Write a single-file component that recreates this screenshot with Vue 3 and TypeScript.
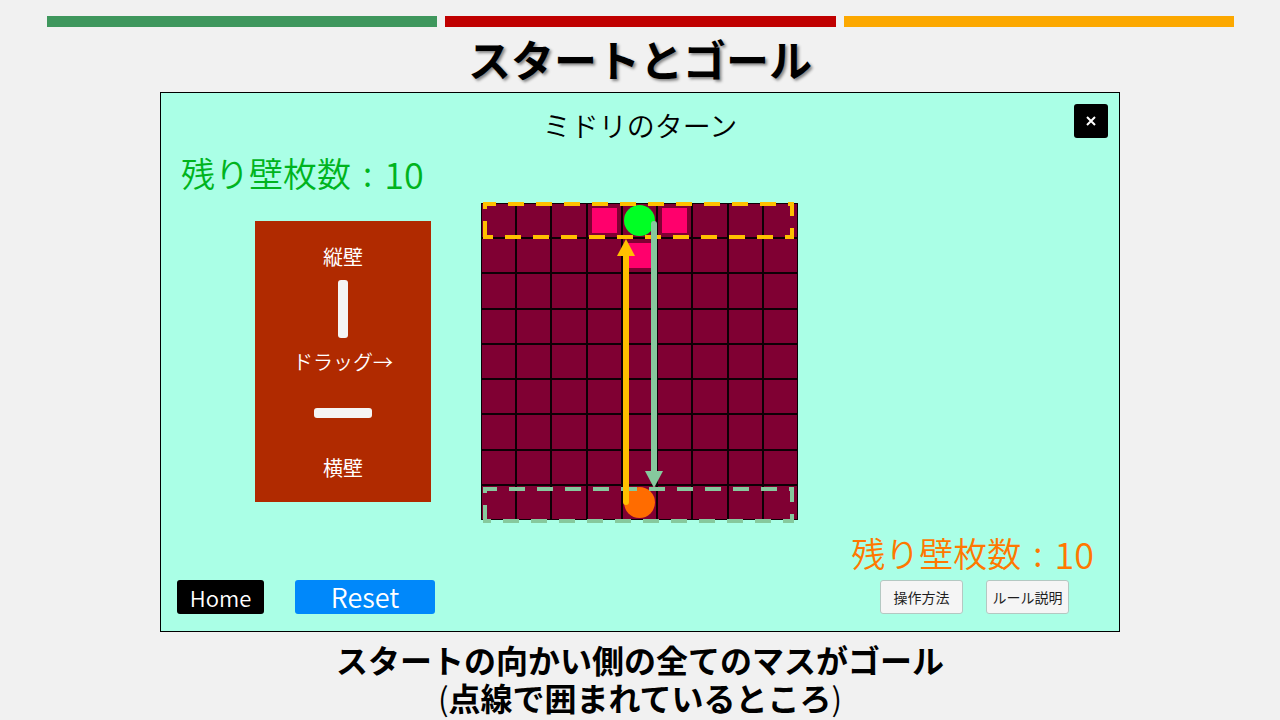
<script setup lang="ts">
import { ref } from 'vue'

type Piece = 'green' | 'orange' | null

interface Cell {
  id: number
  piece: Piece
  movable: boolean
}

const SIZE = 9
const wallsGreen = ref(10)
const wallsOrange = ref(10)

const movable = new Set<number>([3, 5, 13])

const cells: Cell[] = Array.from({ length: SIZE * SIZE }, (_, id) => ({
  id,
  piece: id === 4 ? 'green' : id === 76 ? 'orange' : null,
  movable: movable.has(id),
}))
</script>

<template>
  <main class="slide">
    <div class="stripes">
      <span class="stripe stripe-green"></span>
      <span class="stripe stripe-red"></span>
      <span class="stripe stripe-amber"></span>
    </div>

    <h1 class="heading">スタートとゴール</h1>

    <section class="game">
      <header class="game-head">
        <h2 class="turn">ミドリのターン</h2>
        <button class="close" type="button" aria-label="閉じる">
          <svg width="12" height="12" viewBox="0 0 12 12">
            <path d="M2 2L10 10M10 2L2 10" />
          </svg>
        </button>
      </header>

      <div class="play">
        <div class="side">
          <p class="walls walls-green">
            <span>残り壁枚数</span><span>:</span><span class="count">{{ wallsGreen }}</span>
          </p>
          <div class="tray">
            <p class="tray-label">縦壁</p>
            <div class="wall wall-vertical" draggable="true"></div>
            <p class="tray-label drag-label">ドラッグ→</p>
            <div class="wall wall-horizontal" draggable="true"></div>
            <p class="tray-label bottom-label">横壁</p>
          </div>
        </div>

        <div class="board">
          <div class="cells">
            <div v-for="cell in cells" :key="cell.id" class="cell">
              <button v-if="cell.movable" class="target" type="button" aria-label="移動"></button>
              <span v-if="cell.piece" class="piece" :class="cell.piece"></span>
            </div>
          </div>
          <svg class="guides" viewBox="0 0 318 318">
            <path class="goal goal-yellow" d="M4 34V1H311V34Z" />
            <path class="goal goal-green" d="M4 318V286H311V318Z" />
            <path class="shaft shaft-yellow" d="M145 299V52" />
            <path class="tip-yellow" d="M145 36L154 53H136Z" />
            <path class="shaft shaft-green" d="M173 21V269" />
            <path class="tip-green" d="M173 285L182 268H164Z" />
          </svg>
        </div>

        <p class="walls walls-orange">
          <span>残り壁枚数</span><span>:</span><span class="count">{{ wallsOrange }}</span>
        </p>
      </div>

      <footer class="actions">
        <button class="btn home" type="button">Home</button>
        <button class="btn reset" type="button">Reset</button>
        <div class="help">
          <button class="btn light" type="button">操作方法</button>
          <button class="btn light" type="button">ルール説明</button>
        </div>
      </footer>
    </section>

    <p class="caption">
      スタートの向かい側の全てのマスがゴール<br />
      <span class="paren">(</span>点線で囲まれているところ<span class="paren">)</span>
    </p>
  </main>
</template>

<style>
body {
  margin: 0;
  background: #f1f1f1;
}
</style>

<style scoped>
* {
  box-sizing: border-box;
}

.slide {
  display: flex;
  flex-direction: column;
  min-height: 100vh;
  padding-top: 16px;
  background: #f1f1f1;
  color: #000;
  font-family: 'Noto Sans CJK JP', sans-serif;
}

h1,
h2,
p {
  margin: 0;
}

button {
  padding: 0;
  border: 0;
  font-family: inherit;
}

.stripes {
  display: flex;
  gap: 8px;
  padding: 0 46px 0 47px;
}

.stripe {
  flex: 1;
  height: 11px;
}

.stripe-green {
  background: #3f975d;
}

.stripe-red {
  background: #c00000;
}

.stripe-amber {
  background: #fca800;
}

.heading {
  height: 65px;
  text-align: center;
  font-size: 43px;
  line-height: 62px;
  font-weight: 700;
  text-shadow: 2px 2px 3px rgba(0, 0, 0, 0.45);
}

.game {
  width: 75%;
  margin: 0 auto;
  padding-bottom: 17px;
  border: 1px solid #000;
  background: #aaffe6;
}

.game-head {
  display: grid;
  grid-template-columns: 1fr auto 1fr;
  align-items: start;
  height: 59px;
  padding: 11px 11px 0;
}

.turn {
  grid-column: 2;
  font-size: 28px;
  line-height: 42px;
  font-weight: 350;
}

.close {
  display: flex;
  align-items: center;
  justify-content: center;
  justify-self: end;
  width: 34px;
  height: 34px;
  border-radius: 3px;
  background: #000;
}

.close path {
  stroke: #fff;
  stroke-width: 2;
}

.play {
  display: grid;
  grid-template-columns: 1fr auto 1fr;
}

.walls {
  display: flex;
  gap: 12px;
  height: 44px;
  font-size: 34px;
  line-height: 42px;
  font-weight: 350;
}

.count {
  font-size: 36px;
}

.walls-green {
  padding-left: 20px;
  color: #00b41e;
}

.walls-orange {
  align-self: end;
  justify-self: end;
  padding-right: 25px;
  color: #ff7800;
}

.tray {
  display: flex;
  flex-direction: column;
  align-items: center;
  width: 176px;
  height: 281px;
  margin: 25px 0 0 94px;
  padding-top: 22px;
  background: #b02a00;
}

.tray-label {
  color: #fff;
  font-size: 20px;
  line-height: 28px;
}

.drag-label {
  margin-top: 10px;
  font-weight: 350;
}

.bottom-label {
  margin-top: 36px;
}

.wall {
  border-radius: 3px;
  background: #f5f5f5;
  cursor: grab;
}

.wall-vertical {
  width: 10px;
  height: 58px;
  margin-top: 9px;
}

.wall-horizontal {
  width: 58px;
  height: 10px;
  margin-top: 32px;
}

.board {
  position: relative;
  width: 318px;
  height: 318px;
  margin: 51px 0 55px;
}

.cells {
  display: grid;
  grid-template-columns: repeat(9, 1fr);
  grid-template-rows: repeat(9, 1fr);
  gap: 2px;
  width: 317px;
  height: 317px;
  padding: 1px;
  background: #0d0005;
}

.cell {
  display: flex;
  align-items: center;
  justify-content: center;
  background: #800033;
}

.target {
  width: 25px;
  height: 25px;
  background: #ff006c;
}

.piece {
  width: 31px;
  height: 31px;
  border-radius: 50%;
}

.green {
  background: #00ff24;
}

.orange {
  background: #ff6c00;
}

.guides {
  position: absolute;
  inset: 0;
  overflow: visible;
  pointer-events: none;
}

.goal {
  fill: none;
  stroke-width: 4;
  stroke-dasharray: 16 12;
}

.goal-yellow,
.shaft-yellow {
  stroke: #ffc000;
}

.goal-green,
.shaft-green {
  stroke: #86c99d;
}

.shaft {
  stroke-width: 6;
  stroke-linecap: round;
}

.tip-yellow {
  fill: #ffc000;
}

.tip-green {
  fill: #86c99d;
}

.actions {
  display: flex;
  gap: 31px;
  margin-top: 4px;
  padding: 0 50px 0 16px;
}

.btn {
  height: 34px;
  border-radius: 3px;
  line-height: 34px;
}

.home {
  width: 87px;
  background: #000;
  color: #fff;
  font-size: 22px;
  font-weight: 350;
}

.reset {
  width: 140px;
  background: #0088fa;
  color: #fff;
  font-size: 27px;
  font-weight: 350;
}

.help {
  display: flex;
  gap: 23px;
  margin-left: auto;
}

.light {
  width: 83px;
  border: 1px solid #b4c8c2;
  background: #f5f5f5;
  color: #1e1e1e;
  font-size: 14px;
  line-height: 32px;
}

.caption {
  margin-top: 8px;
  text-align: center;
  font-size: 32px;
  line-height: 38px;
  font-weight: 700;
}

.paren {
  font-weight: 350;
}
</style>
